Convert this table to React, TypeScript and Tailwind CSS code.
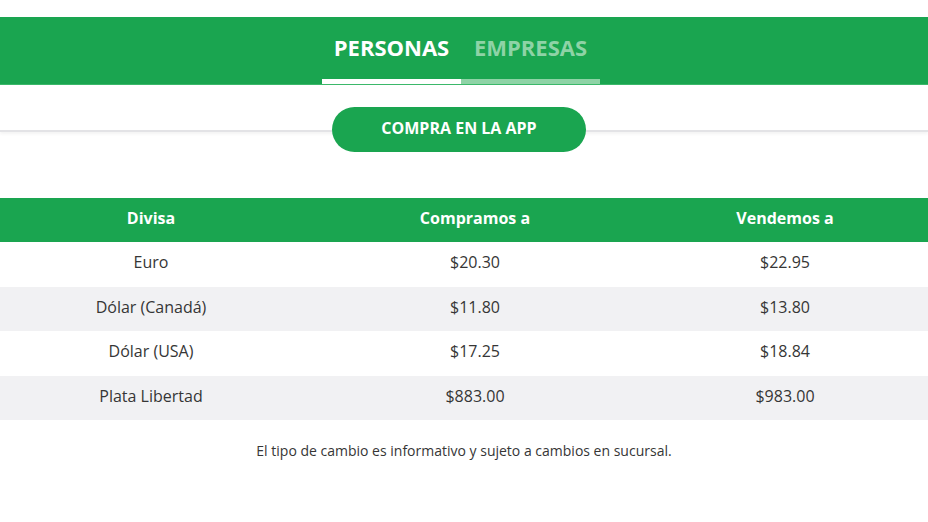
const rows = [
    { name: 'Euro', buy: '$20.30', sell: '$22.95' },
    { name: 'Dólar (Canadá)', buy: '$11.80', sell: '$13.80' },
    { name: 'Dólar (USA)', buy: '$17.25', sell: '$18.84' },
    { name: 'Plata Libertad', buy: '$883.00', sell: '$983.00' },
];

export default function App() {
    return (
        <div className="w-[928px] h-[522px] overflow-hidden bg-white text-[#363636] font-['Open_Sans',sans-serif]">
            <div className="h-[17px]" />

            <nav className="h-[68px] bg-[#1aa550] flex justify-center items-end pr-[6px] border-b border-[#3bb86a]">
                <div className="w-[139px] flex flex-col items-center">
                    <span className="text-[22px] font-bold text-white leading-none mb-[21px]">PERSONAS</span>
                    <div className="h-[5px] w-full bg-white" />
                </div>
                <div className="w-[139px] flex flex-col items-center">
                    <span className="text-[22px] font-bold text-[#8ed3a6] leading-none mb-[21px]">EMPRESAS</span>
                    <div className="h-[5px] w-full bg-[#8ed3a6]" />
                </div>
            </nav>

            <div className="h-[47px] bg-white border-b-2 border-[#e3e3e6] shadow-[0_2px_3px_rgba(0,0,0,0.05)]" />
            <div className="flex justify-center -mt-[25px] relative pr-[10px]">
                <button className="w-[254px] h-[45px] rounded-full bg-[#1aa550] text-white text-[16px] font-bold pb-[3px]">
                    COMPRA EN LA APP
                </button>
            </div>

            <div className="mt-[46px]">
                <div className="grid grid-cols-[302px_346px_274px] h-[44px] items-center bg-[#1aa550] text-white text-[16px] font-bold text-center pb-[5px]">
                    <span>Divisa</span>
                    <span>Compramos a</span>
                    <span>Vendemos a</span>
                </div>
                {rows.map((r, i) => (
                    <div
                        key={r.name}
                        className={`grid grid-cols-[302px_346px_274px] items-center text-[16px] text-center pb-[5px] ${
                            i % 2 === 1 ? 'bg-[#f1f1f3] h-[44px]' : 'bg-white h-[45px]'
                        }`}
                    >
                        <span>{r.name}</span>
                        <span>{r.buy}</span>
                        <span>{r.sell}</span>
                    </div>
                ))}
            </div>

            <p className="mt-[20px] text-center text-[14px] text-[#363636]">
                El tipo de cambio es informativo y sujeto a cambios en sucursal.
            </p>
        </div>
    );
}
